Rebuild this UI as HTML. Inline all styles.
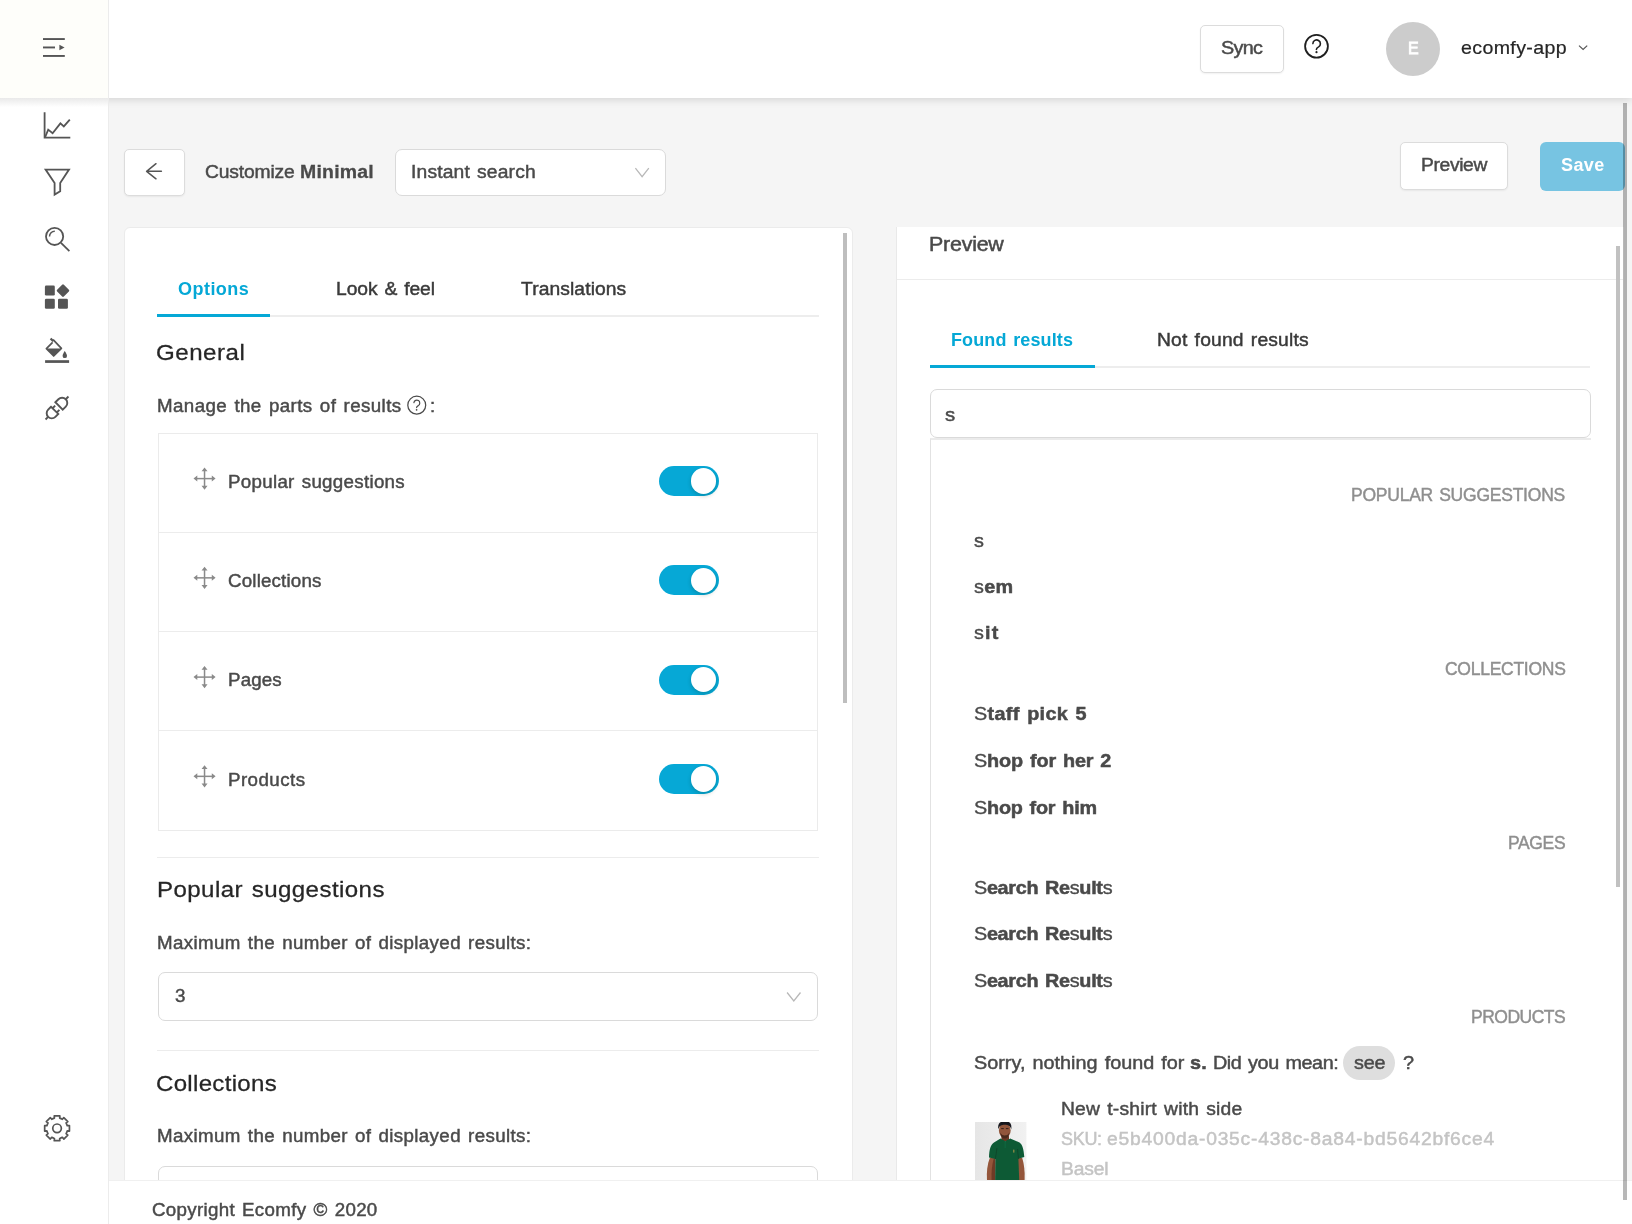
<!DOCTYPE html>
<html lang="en">
<head>
<meta charset="utf-8">
<title>Ecomfy – Customize Minimal</title>
<style>
html,body{margin:0;padding:0}
body{width:1632px;height:1224px;overflow:hidden;background:#f5f5f5;position:relative;font-family:"Liberation Sans",sans-serif;color:#4a4a4a}
.a,.t,svg.i{position:absolute}
.t{white-space:pre;display:block;-webkit-text-stroke-width:.025em;transform-origin:0 0;will-change:transform}
.box{box-sizing:border-box;background:#fff;border:1px solid #dadada;border-radius:7px}
.btn{box-sizing:border-box;background:#fff;border:1px solid #dcdcdc;border-radius:5px;box-shadow:0 1px 2px rgba(0,0,0,.06)}
.hl{height:1px;background:#ececec}
.sw{width:60px;height:30px;border-radius:15px;background:#06a8d6}
.sw:after{content:"";position:absolute;left:32.3px;top:2.3px;width:25.4px;height:25.4px;border-radius:50%;background:#fff;box-shadow:0 2px 4px rgba(0,35,11,.2)}
svg.i{overflow:visible}
</style>
</head>
<body>

<!-- main header -->
<header class="a" style="left:0;top:0;width:1632px;height:98px;background:#fff;box-shadow:0 2px 8px rgba(0,0,0,.13)"></header>

<!-- sidebar -->
<aside class="a" style="left:0;top:106px;width:108px;height:1118px;background:#fff"></aside>
<div class="a" style="left:0;top:98px;width:108px;height:9px;background:linear-gradient(#e9e9e9,#fff)"></div>
<div class="a" style="left:0;top:0;width:108px;height:98px;background:#fefefa"></div>
<div class="a" style="left:108px;top:0;width:1px;height:1224px;background:#ececec"></div>

<!-- toolbar boxes -->
<div class="a btn" style="left:1200px;top:25px;width:84px;height:48px"></div>
<div class="a" style="left:1386px;top:21.8px;width:54px;height:54px;border-radius:50%;background:#cccccc"></div>
<div class="a btn" style="left:124px;top:149px;width:61px;height:47px"></div>
<div class="a box" style="left:395px;top:149px;width:271px;height:47px"></div>
<div class="a btn" style="left:1400px;top:142px;width:108px;height:48px"></div>
<div class="a" style="left:1540px;top:141.5px;width:85px;height:49px;border-radius:6px;background:#77c4e2"></div>

<!-- left panel -->
<section class="a" style="box-sizing:border-box;left:124px;top:227px;width:729px;height:970px;background:#fff;border:1px solid #ebebeb;border-radius:6px"></section>
<div class="a" style="left:843.3px;top:233px;width:3.7px;height:470px;background:#bebebe"></div>
<div class="a" style="left:157px;top:315px;width:662px;height:2px;background:#ededed"></div>
<div class="a" style="left:157px;top:314px;width:113px;height:3px;background:#05a8d6"></div>
<div class="a" style="box-sizing:border-box;left:158px;top:433px;width:660px;height:397.5px;border:1px solid #ebebeb;background:#fff"></div>
<div class="a hl" style="left:159px;top:532px;width:658px"></div>
<div class="a hl" style="left:159px;top:631px;width:658px"></div>
<div class="a hl" style="left:159px;top:730px;width:658px"></div>
<div class="a sw" style="left:658.7px;top:466.2px"></div>
<div class="a sw" style="left:658.7px;top:565.4px"></div>
<div class="a sw" style="left:658.7px;top:664.7px"></div>
<div class="a sw" style="left:658.7px;top:764px"></div>
<div class="a hl" style="left:157px;top:857px;width:662px"></div>
<div class="a box" style="left:158px;top:972px;width:660px;height:49px"></div>
<div class="a hl" style="left:157px;top:1050px;width:662px"></div>
<div class="a box" style="left:158px;top:1166px;width:660px;height:48.5px"></div>

<!-- right panel -->
<section class="a" style="left:896px;top:227px;width:727px;height:960px;background:#fff;border-left:1px solid #e9e9e9"></section>
<div class="a hl" style="left:897px;top:279px;width:726px"></div>
<div class="a" style="left:930px;top:365.8px;width:660px;height:2px;background:#ededed"></div>
<div class="a" style="left:930px;top:364.7px;width:164.6px;height:3px;background:#05a8d6"></div>
<div class="a box" style="left:930px;top:389px;width:661px;height:49px"></div>
<div class="a" style="left:930px;top:438px;width:660px;height:760px;border-left:1px solid #e2e2e2;border-top:2px solid #ebebeb"></div>
<div class="a" style="left:1343.3px;top:1046px;width:51.8px;height:33.8px;border-radius:17px;background:#dedede"></div>
<div class="a" style="left:1616px;top:246px;width:4px;height:641px;background:#c1c1c1"></div>

<!-- sidebar + toolbar icons (page coordinates) -->
<svg class="i" style="left:0;top:0" width="1632" height="1224" viewBox="0 0 1632 1224" fill="none" stroke-linecap="butt" stroke-linejoin="miter">
<g fill="#555" stroke="none"><rect x="43" y="38.1" width="21.8" height="1.9"/><rect x="43" y="46.5" width="12" height="1.9"/><rect x="43" y="55" width="21.8" height="1.9"/><path d="M59.4,44.7 L64.6,47.5 L59.4,50.3Z"/></g>
<g stroke="#555" stroke-width="1.8"><path d="M44.6,112.2 V137.7 H70.3"/><path d="M45.2,137 L48.2,129.6 L52.6,133.2 L60.4,123.4 L63.8,126.4 L69.8,119.6" stroke-linejoin="miter"/></g>
<path d="M45.6,169.6 H69 L60.2,183 V191.2 L54.6,194.6 V183 Z" stroke="#555" stroke-width="1.8" stroke-linejoin="miter"/>
<g stroke="#555" stroke-width="1.8"><circle cx="54.6" cy="236.4" r="8.6"/><path d="M61,242.8 L69.4,251.2"/><path d="M49.5,236.6 A5.2,5.2 0 0 1 54.8,231.3" stroke-width="1.5"/></g>
<g fill="#555" stroke="none"><rect x="44.9" y="285.6" width="9.9" height="10" rx="1.3"/><rect x="44.9" y="298.8" width="9.9" height="10" rx="1.3"/><rect x="58" y="298.8" width="9.9" height="10" rx="1.3"/><rect x="58.25" y="285.85" width="9.5" height="9.5" rx="1.2" transform="rotate(45 63 290.6)"/></g>
<g><path d="M53.1,339.6 L61.4,348.3 L53.7,356 L46.4,348.6 L52.6,342.4" stroke="#555" stroke-width="1.7" stroke-linejoin="round"/><path d="M50.6,338.4 L53.3,341.3" stroke="#555" stroke-width="2.2"/><path d="M46.6,348.4 H61.3 L53.7,356.2Z" fill="#555"/><path d="M64.7,351.1 C66,353 67,354.6 67,355.9 A2.2,2.2 0 0 1 62.6,355.9 C62.6,354.6 63.6,353 64.7,351.1Z" fill="#555"/><rect x="45.1" y="360.2" width="24" height="2.7" fill="#555"/></g>
<g stroke="#555" stroke-width="1.9" transform="rotate(-45 57 408)"><path d="M40.8,408 H44.5"/><path d="M53.7,402.9 H49.6 A5.1,5.1 0 0 0 49.6,413.1 H53.7 Z"/><path d="M53.7,405 H57.4 M53.7,411 H57.4"/><path d="M59.9,402.8 H64.2 A5.2,5.2 0 0 1 64.2,413.2 H59.9 Z"/><path d="M69.4,408 H73.2"/></g>
<g stroke="#555" stroke-width="1.7" stroke-linejoin="round"><path d="M67.23,1125.67 L69.44,1125.49 L69.44,1131.11 L67.23,1130.93 A10.5,10.5 0 0 1 66.11,1133.63 L67.81,1135.07 L63.83,1139.05 L62.39,1137.35 A10.5,10.5 0 0 1 59.69,1138.47 L59.87,1140.68 L54.25,1140.68 L54.43,1138.47 A10.5,10.5 0 0 1 51.73,1137.35 L50.29,1139.05 L46.31,1135.07 L48.01,1133.63 A10.5,10.5 0 0 1 46.89,1130.93 L44.68,1131.11 L44.68,1125.49 L46.89,1125.67 A10.5,10.5 0 0 1 48.01,1122.97 L46.31,1121.53 L50.29,1117.55 L51.73,1119.25 A10.5,10.5 0 0 1 54.43,1118.13 L54.25,1115.92 L59.87,1115.92 L59.69,1118.13 A10.5,10.5 0 0 1 62.39,1119.25 L63.83,1117.55 L67.81,1121.53 L66.11,1122.97 A10.5,10.5 0 0 1 67.23,1125.67Z"/><circle cx="57.06" cy="1128.3" r="4.3"/></g>
<g stroke="#1f1f1f" stroke-width="1.8" stroke-linecap="round"><circle cx="1316.5" cy="46.2" r="11.4"/><path d="M1312.9,43.6 A3.75,3.75 0 1 1 1318.6,46.9 Q1316.4,48 1316.4,49.4" stroke-width="1.6"/></g><circle cx="1316.5" cy="52.2" r="1.1" fill="#1f1f1f"/>
<path d="M1579,45.6 L1583.1,49.4 L1587.2,45.6" stroke="#555" stroke-width="1.2"/>
<path d="M161.4,171.3 H147 M156,163.7 L146.6,171.3 L156,178.8" stroke="#555" stroke-width="1.5" stroke-linecap="round" stroke-linejoin="round"/>
<path d="M635.4,168.1 L642.1,176.6 L648.8,168.1" stroke="#b8b8b8" stroke-width="1.3"/>
<path d="M787.1,992.5 L793.8,1001 L800.5,992.5" stroke="#b8b8b8" stroke-width="1.3"/>
<g stroke="#4a4a4a" stroke-width="1.25" stroke-linecap="round"><circle cx="416.75" cy="405.15" r="8.95"/><path d="M413.9,402.6 A2.95,2.95 0 1 1 418.3,405.6 Q416.6,406.5 416.6,407.6" stroke-width="1.2"/></g><circle cx="416.6" cy="409.8" r="0.85" fill="#4a4a4a"/>
<g fill="#8a8a8a" stroke="none"><rect x="195.49" y="477.85" width="18.10" height="1.5"/><rect x="203.79" y="469.55" width="1.5" height="18.10"/><path d="M193.49,478.60 l3.8,-3.0 v6.0z M215.59,478.60 l-3.8,-3.0 v6.0z M204.54,467.55 l-3.0,3.8 h6.0z M204.54,489.65 l-3.0,-3.8 h6.0z"/></g>
<g fill="#8a8a8a" stroke="none"><rect x="195.49" y="577.10" width="18.10" height="1.5"/><rect x="203.79" y="568.80" width="1.5" height="18.10"/><path d="M193.49,577.85 l3.8,-3.0 v6.0z M215.59,577.85 l-3.8,-3.0 v6.0z M204.54,566.80 l-3.0,3.8 h6.0z M204.54,588.90 l-3.0,-3.8 h6.0z"/></g>
<g fill="#8a8a8a" stroke="none"><rect x="195.49" y="676.35" width="18.10" height="1.5"/><rect x="203.79" y="668.05" width="1.5" height="18.10"/><path d="M193.49,677.10 l3.8,-3.0 v6.0z M215.59,677.10 l-3.8,-3.0 v6.0z M204.54,666.05 l-3.0,3.8 h6.0z M204.54,688.15 l-3.0,-3.8 h6.0z"/></g>
<g fill="#8a8a8a" stroke="none"><rect x="195.49" y="775.60" width="18.10" height="1.5"/><rect x="203.79" y="767.30" width="1.5" height="18.10"/><path d="M193.49,776.35 l3.8,-3.0 v6.0z M215.59,776.35 l-3.8,-3.0 v6.0z M204.54,765.30 l-3.0,3.8 h6.0z M204.54,787.40 l-3.0,-3.8 h6.0z"/></g>
</svg>
<svg class="i" style="left:975.3px;top:1122px;overflow:hidden" width="51.4" height="58" viewBox="0 0 51.4 58">
<defs><linearGradient id="pbg" x1="0" y1="0" x2="1" y2="0"><stop offset="0" stop-color="#e6e6e6"/><stop offset="1" stop-color="#f1f1f1"/></linearGradient><filter id="pbl" x="-10%" y="-10%" width="120%" height="120%"><feGaussianBlur stdDeviation="0.45"/></filter></defs>
<rect width="51.4" height="58" fill="url(#pbg)"/>
<g filter="url(#pbl)">
<path d="M12,58 C11.4,50 12.4,42 14.8,36 L20.4,35 L20.4,58Z" fill="#94573a"/>
<path d="M16.5,58 C16.2,50 17,43 18.6,37 L20.4,36 L20.4,58Z" fill="#6e3b26"/>
<path d="M49.6,58 C50,50 49.2,42 47.2,36 L42.4,35 L43.6,58Z" fill="#94573a"/>
<rect x="26.4" y="11" width="7.6" height="8" fill="#6a3724"/>
<ellipse cx="29.8" cy="8.4" rx="5.9" ry="7.6" fill="#91553a"/>
<path d="M25.2,10.5 C26,15.5 28,16.6 29.8,16.6 C31.6,16.6 33.6,15.5 34.4,10.5 C33,13 31.5,13.4 29.8,13.4 C28.100,13.400 26.600,13 25.200,10.500Z" fill="#4a2a1e"/>
<path d="M26.2,6.600 h2.600 M30.900,6.600 h2.600" stroke="#2a1a14" stroke-width="0.9"/>
<path d="M23.300,7.500 C22.400,0.500 26,-0.800 29.800,-0.800 C33.800,-0.800 37.200,0.500 36.300,7.500 C35.500,3.800 33,2.800 29.800,2.800 C26.600,2.800 24.100,3.800 23.300,7.500Z" fill="#17171d"/>
<path d="M25.500,16.400 L30.200,19.200 L35.200,16.400 L44.500,20.500 C47.500,22.500 48.800,28 49.300,35 L43.400,36.800 L44.200,58 L20.200,58 L20.400,37 L14,35.600 C14.200,28 15.500,23 19,20.600Z" fill="#0a5a36"/>
<path d="M20.400,37 L22,26 M43.400,36.800 L42.600,27" stroke="#064226" stroke-width="0.8"/>
<path d="M30.200,19.200 V26" stroke="#0f6e45" stroke-width="0.8"/>
<rect x="38.400" y="27.600" width="0.900" height="3" fill="#c9a04a"/>
</g>
</svg>

<span class="t" style="left:1221.1px;top:36px;font-size:18.5px;line-height:24px;letter-spacing:-0.64px;transform:scaleX(1.07);color:#4a4a4a;">Sync</span>
<span class="t" style="left:1407.9px;top:38px;font-size:16px;line-height:21px;color:#fff;-webkit-text-stroke-width:.05em;">E</span>
<span class="t" style="left:1461.3px;top:35px;font-size:19px;line-height:25px;letter-spacing:0.36px;transform:scaleX(1.03);color:#262626;-webkit-text-stroke-width:.012em;">ecomfy-app</span>
<span class="t" style="left:205.1px;top:161px;font-size:18px;line-height:23px;letter-spacing:-0.15px;transform:scaleX(1.07);color:#4a4a4a;">Customize</span>
<span class="t" style="left:299.8px;top:161px;font-size:18px;line-height:23px;letter-spacing:0.21px;transform:scaleX(1.08);color:#4a4a4a;font-weight:700;-webkit-text-stroke-width:.015em;">Minimal</span>
<span class="t" style="left:410.9px;top:161px;font-size:18px;line-height:23px;letter-spacing:0.15px;word-spacing:1.5px;transform:scaleX(1.07);color:#4a4a4a;">Instant search</span>
<span class="t" style="left:1420.9px;top:154px;font-size:18px;line-height:23px;letter-spacing:-0.33px;transform:scaleX(1.07);color:#4a4a4a;">Preview</span>
<span class="t" style="left:1560.9px;top:154px;font-size:18px;line-height:23px;letter-spacing:0.38px;color:#fff;font-weight:700;-webkit-text-stroke-width:0;">Save</span>
<span class="t" style="left:178.0px;top:278px;font-size:18px;line-height:23px;letter-spacing:0.47px;color:#05a8d6;font-weight:700;-webkit-text-stroke-width:0;">Options</span>
<span class="t" style="left:335.5px;top:278px;font-size:18px;line-height:23px;letter-spacing:-0.05px;word-spacing:1.5px;transform:scaleX(1.07);color:#3a3a3a;">Look &amp; feel</span>
<span class="t" style="left:520.8px;top:278px;font-size:18px;line-height:23px;letter-spacing:0.09px;transform:scaleX(1.07);color:#3a3a3a;">Translations</span>
<span class="t" style="left:156.3px;top:338px;font-size:22.5px;line-height:29px;letter-spacing:0.50px;transform:scaleX(1.07);color:#262626;-webkit-text-stroke-width:.012em;">General</span>
<span class="t" style="left:156.7px;top:395px;font-size:17.5px;line-height:23px;letter-spacing:0.39px;word-spacing:1.5px;transform:scaleX(1.07);color:#4a4a4a;">Manage the parts of results</span>
<span class="t" style="left:429.5px;top:395px;font-size:17.5px;line-height:23px;transform:scaleX(1.07);color:#4a4a4a;">:</span>
<span class="t" style="left:227.6px;top:471px;font-size:17.5px;line-height:23px;letter-spacing:0.28px;word-spacing:1.5px;transform:scaleX(1.07);color:#4a4a4a;">Popular suggestions</span>
<span class="t" style="left:227.6px;top:570px;font-size:17.5px;line-height:23px;letter-spacing:0.17px;transform:scaleX(1.07);color:#4a4a4a;">Collections</span>
<span class="t" style="left:227.6px;top:669px;font-size:17.5px;line-height:23px;letter-spacing:0.14px;transform:scaleX(1.07);color:#4a4a4a;">Pages</span>
<span class="t" style="left:227.6px;top:769px;font-size:17.5px;line-height:23px;letter-spacing:0.42px;transform:scaleX(1.07);color:#4a4a4a;">Products</span>
<span class="t" style="left:156.5px;top:875px;font-size:22.5px;line-height:29px;letter-spacing:0.40px;word-spacing:1.5px;transform:scaleX(1.07);color:#262626;-webkit-text-stroke-width:.012em;">Popular suggestions</span>
<span class="t" style="left:156.7px;top:932px;font-size:17.5px;line-height:23px;letter-spacing:0.34px;word-spacing:1.5px;transform:scaleX(1.07);color:#4a4a4a;">Maximum the number of displayed results:</span>
<span class="t" style="left:174.5px;top:985px;font-size:17.5px;line-height:23px;transform:scaleX(1.07);color:#4a4a4a;">3</span>
<span class="t" style="left:156.3px;top:1069px;font-size:22.5px;line-height:29px;letter-spacing:0.28px;transform:scaleX(1.07);color:#262626;-webkit-text-stroke-width:.012em;">Collections</span>
<span class="t" style="left:156.7px;top:1125px;font-size:17.5px;line-height:23px;letter-spacing:0.34px;word-spacing:1.5px;transform:scaleX(1.07);color:#4a4a4a;">Maximum the number of displayed results:</span>
<span class="t" style="left:929.0px;top:231px;font-size:20px;line-height:26px;letter-spacing:-0.20px;transform:scaleX(1.07);color:#4a4a4a;">Preview</span>
<span class="t" style="left:950.9px;top:329px;font-size:18px;line-height:23px;letter-spacing:0.12px;word-spacing:1.5px;color:#05a8d6;font-weight:700;-webkit-text-stroke-width:0;">Found results</span>
<span class="t" style="left:1157.2px;top:329px;font-size:18px;line-height:23px;letter-spacing:0.16px;word-spacing:1.5px;transform:scaleX(1.07);color:#3a3a3a;">Not found results</span>
<span class="t" style="left:944.8px;top:402px;font-size:19px;line-height:25px;transform:scaleX(1.07);color:#4a4a4a;">s</span>
<span class="t" style="left:1351.4px;top:484px;font-size:17.5px;line-height:23px;letter-spacing:-0.23px;word-spacing:1.5px;color:#8f8f8f;">POPULAR SUGGESTIONS</span>
<span class="t" style="left:1444.8px;top:658px;font-size:17.5px;line-height:23px;letter-spacing:-0.27px;color:#8f8f8f;">COLLECTIONS</span>
<span class="t" style="left:1508.0px;top:832px;font-size:17.5px;line-height:23px;letter-spacing:-0.35px;color:#8f8f8f;">PAGES</span>
<span class="t" style="left:1471.0px;top:1006px;font-size:17.5px;line-height:23px;letter-spacing:-0.51px;color:#8f8f8f;">PRODUCTS</span>
<span class="t" style="left:973.5px;top:529px;font-size:18.5px;line-height:24px;transform:scaleX(1.07);color:#4a4a4a;">s</span>
<span class="t" style="left:973.5px;top:575px;font-size:18.5px;line-height:24px;letter-spacing:0.26px;transform:scaleX(1.07);color:#4a4a4a;font-weight:700;-webkit-text-stroke:0.5px #4a4a4a;"><span style="font-weight:400;-webkit-text-stroke-width:.02em">s</span>em</span>
<span class="t" style="left:973.5px;top:621px;font-size:18.5px;line-height:24px;letter-spacing:1.11px;transform:scaleX(1.07);color:#4a4a4a;font-weight:700;-webkit-text-stroke:0.5px #4a4a4a;"><span style="font-weight:400;-webkit-text-stroke-width:.02em">s</span>it</span>
<span class="t" style="left:973.5px;top:702px;font-size:18.5px;line-height:24px;letter-spacing:0.32px;word-spacing:1.5px;transform:scaleX(1.07);color:#4a4a4a;font-weight:700;-webkit-text-stroke:0.5px #4a4a4a;"><span style="font-weight:400;-webkit-text-stroke-width:.02em">S</span>taff pick 5</span>
<span class="t" style="left:973.5px;top:749px;font-size:18.5px;line-height:24px;letter-spacing:-0.12px;word-spacing:1.5px;transform:scaleX(1.07);color:#4a4a4a;font-weight:700;-webkit-text-stroke:0.5px #4a4a4a;"><span style="font-weight:400;-webkit-text-stroke-width:.02em">S</span>hop for her 2</span>
<span class="t" style="left:973.5px;top:796px;font-size:18.5px;line-height:24px;letter-spacing:-0.19px;word-spacing:1.5px;transform:scaleX(1.07);color:#4a4a4a;font-weight:700;-webkit-text-stroke:0.5px #4a4a4a;"><span style="font-weight:400;-webkit-text-stroke-width:.02em">S</span>hop for him</span>
<span class="t" style="left:973.5px;top:876px;font-size:18.5px;line-height:24px;letter-spacing:-0.28px;word-spacing:1.5px;transform:scaleX(1.07);color:#4a4a4a;font-weight:700;-webkit-text-stroke:0.5px #4a4a4a;"><span style="font-weight:400;-webkit-text-stroke-width:.02em">S</span>earch Re<span style="font-weight:400;-webkit-text-stroke-width:.02em">s</span>ult<span style="font-weight:400;-webkit-text-stroke-width:.02em">s</span></span>
<span class="t" style="left:973.5px;top:922px;font-size:18.5px;line-height:24px;letter-spacing:-0.28px;word-spacing:1.5px;transform:scaleX(1.07);color:#4a4a4a;font-weight:700;-webkit-text-stroke:0.5px #4a4a4a;"><span style="font-weight:400;-webkit-text-stroke-width:.02em">S</span>earch Re<span style="font-weight:400;-webkit-text-stroke-width:.02em">s</span>ult<span style="font-weight:400;-webkit-text-stroke-width:.02em">s</span></span>
<span class="t" style="left:973.5px;top:969px;font-size:18.5px;line-height:24px;letter-spacing:-0.28px;word-spacing:1.5px;transform:scaleX(1.07);color:#4a4a4a;font-weight:700;-webkit-text-stroke:0.5px #4a4a4a;"><span style="font-weight:400;-webkit-text-stroke-width:.02em">S</span>earch Re<span style="font-weight:400;-webkit-text-stroke-width:.02em">s</span>ult<span style="font-weight:400;-webkit-text-stroke-width:.02em">s</span></span>
<span class="t" style="left:974.2px;top:1051px;font-size:18.5px;line-height:24px;letter-spacing:0.01px;word-spacing:1.5px;transform:scaleX(1.07);color:#4a4a4a;">Sorry, nothing found for</span>
<span class="t" style="left:1190.4px;top:1051px;font-size:18.5px;line-height:24px;letter-spacing:0.14px;transform:scaleX(1.07);color:#4a4a4a;font-weight:700;-webkit-text-stroke:0.5px #4a4a4a;">s.</span>
<span class="t" style="left:1212.8px;top:1051px;font-size:18.5px;line-height:24px;letter-spacing:-0.40px;word-spacing:1.5px;transform:scaleX(1.07);color:#4a4a4a;">Did you mean:</span>
<span class="t" style="left:1354.1px;top:1051px;font-size:18.5px;line-height:24px;letter-spacing:-0.21px;transform:scaleX(1.07);color:#4a4a4a;">see</span>
<span class="t" style="left:1402.5px;top:1051px;font-size:18.5px;line-height:24px;transform:scaleX(1.07);color:#4a4a4a;">?</span>
<span class="t" style="left:1061.2px;top:1098px;font-size:18px;line-height:23px;letter-spacing:0.19px;word-spacing:1.5px;transform:scaleX(1.07);color:#4a4a4a;">New t-shirt with side</span>
<span class="t" style="left:1061.2px;top:1128px;font-size:18px;line-height:23px;letter-spacing:-0.31px;color:#c4c4c4;">SKU:</span>
<span class="t" style="left:1106.5px;top:1128px;font-size:18px;line-height:23px;letter-spacing:0.73px;transform:scaleX(1.07);color:#c4c4c4;">e5b400da-035c-438c-8a84-bd5642bf6ce4</span>
<span class="t" style="left:1061.2px;top:1158px;font-size:18px;line-height:23px;letter-spacing:-0.16px;transform:scaleX(1.07);color:#c4c4c4;">Basel</span>

<!-- footer -->
<footer class="a" style="left:109px;top:1180px;width:1523px;height:44px;background:#fff;border-top:1px solid #f0f0f0"></footer>
<span class="t" style="left:152.0px;top:1199px;font-size:17.5px;line-height:23px;letter-spacing:0.29px;word-spacing:1.5px;transform:scaleX(1.07);color:#4a4a4a;">Copyright Ecomfy © 2020</span>

<!-- page scrollbar -->
<div class="a" style="left:1623px;top:103px;width:4px;height:1096.5px;background:rgba(0,0,0,.28)"></div>
</body>
</html>
